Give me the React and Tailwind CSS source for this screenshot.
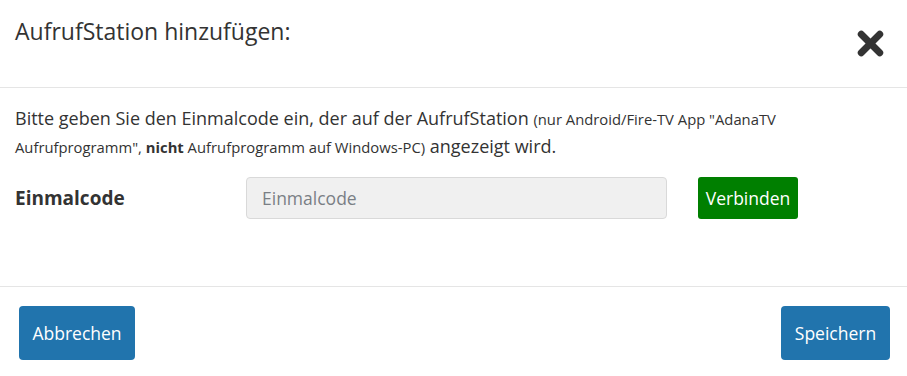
import { X } from 'lucide-react';

const font = { fontFamily: '"Open Sans", "Noto Sans", sans-serif' };

export default function App() {
  return (
    <div className="w-[907px] h-[376px] bg-white text-[#333]" style={font}>
      {/* Kopf */}
      <div className="flex justify-between items-start h-[88px] border-b border-[#e5e5e5] pl-[15px] pr-[18px]">
        <h4 className="text-[23px] leading-[30px] pt-[16px]">AufrufStation hinzufügen:</h4>
        <button className="mt-[25px] text-[#333]">
          <X className="w-[37px] h-[37px]" strokeWidth={4.5} />
        </button>
      </div>

      {/* Inhalt */}
      <div className="h-[199px] border-b border-[#e5e5e5] px-[15px] pt-[16px]">
        <p className="text-[18px] leading-[28px]">
          Bitte geben Sie den Einmalcode ein, der auf der AufrufStation{' '}
          <span className="text-[14.8px] leading-[20px]">(nur Android/Fire-TV App "AdanaTV Aufrufprogramm", <b>nicht</b> Aufrufprogramm auf Windows-PC)</span>{' '}
          angezeigt wird.
        </p>
        <div className="flex items-center mt-[17px]">
          <label className="w-[231px] font-bold text-[19px]">Einmalcode</label>
          <input
            type="text"
            placeholder="Einmalcode"
            className="w-[421px] h-[42px] bg-[#f0f0f0] border border-[#d9d9d9] rounded-[4px] px-[15px] text-[17.5px] placeholder:text-[#7a7f85] outline-none"
          />
          <button className="ml-[31px] h-[42px] w-[100px] bg-[#007f00] text-white rounded-[3px] text-[17.5px]">
            Verbinden
          </button>
        </div>
      </div>

      {/* Fuß */}
      <div className="flex justify-between items-start pt-[19px] pl-[19px] pr-[17px]">
        <button className="w-[116px] h-[54px] bg-[#2174ad] text-white rounded-[4px] text-[17.5px]">Abbrechen</button>
        <button className="w-[109px] h-[54px] bg-[#2174ad] text-white rounded-[4px] text-[17.5px]">Speichern</button>
      </div>
    </div>
  );
}
